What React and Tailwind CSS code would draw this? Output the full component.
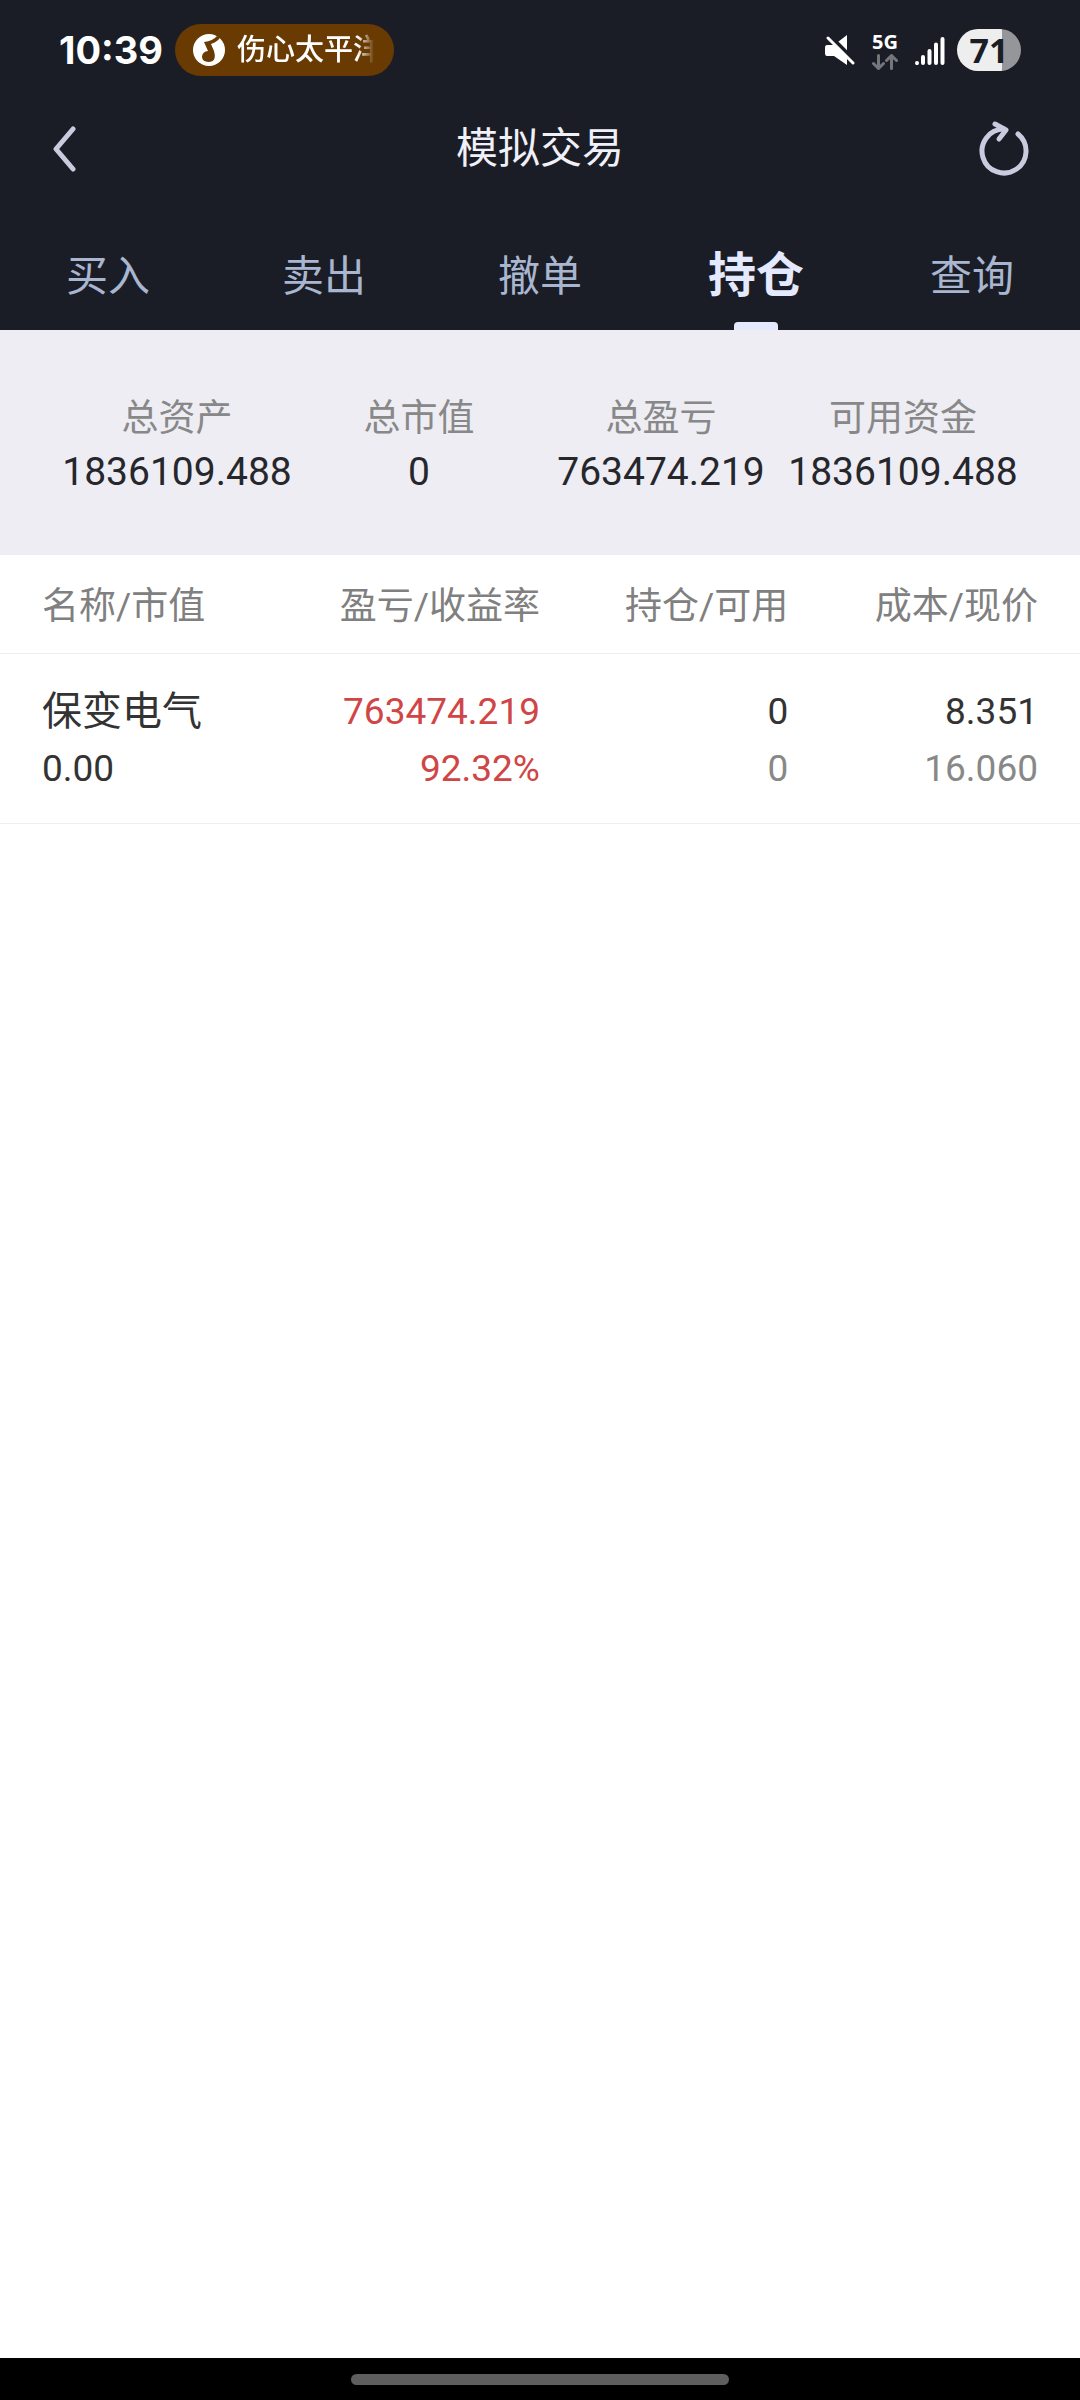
import React from "react";

const tabs = ["买入", "卖出", "撤单", "持仓", "查询"];

const summary = [
  { label: "总资产", value: "1836109.488" },
  { label: "总市值", value: "0" },
  { label: "总盈亏", value: "763474.219" },
  { label: "可用资金", value: "1836109.488" },
];

const columns = ["名称/市值", "盈亏/收益率", "持仓/可用", "成本/现价"];

function StatusBar() {
  return (
    <div className="flex h-[100px] items-center justify-between px-[59px]">
      <div className="flex items-center gap-3 text-white">
        <time className="font-[Inter] text-[38px] font-bold leading-none">10:39</time>
        <div className="flex h-[52px] items-center gap-3 rounded-full bg-[#693b02] pl-[18px] pr-5">
          <svg className="size-8" viewBox="0 0 32 32" aria-hidden="true">
            <circle cx="16" cy="16" r="16" fill="#fff" />
            <path
              d="M11 8 Q20 7 24 2 L27 3 Q26 7 18 10 L21 17 Q24 28 15.500 28 Q9 27.500 9 22.500 Q9.500 17.500 15 17Z"
              fill="#693b02"
            />
          </svg>
          <div className="w-[137px] overflow-hidden whitespace-nowrap text-[29px] font-medium leading-10 [mask-image:linear-gradient(to_right,black_88%,transparent)]">
            伤心太平洋
          </div>
        </div>
      </div>
      <div className="flex items-center text-white">
        <svg className="mr-4 h-[30px] w-[31px]" viewBox="0 0 31 30" aria-hidden="true">
          <path d="M2 10h7L22 0v30L9 21H2Q0 21 0 18V13Q0 10 2 10Z" fill="#fff" />
          <path d="M3 -1 L33 29" stroke="#1b1d26" strokeWidth="4" />
          <path d="M3 3 L28 28" stroke="#fff" strokeWidth="3" strokeLinecap="round" />
        </svg>
        <div className="mr-4 flex flex-col items-center gap-1 pt-1">
          <span className="font-['Open_Sans'] text-[20px] font-bold leading-4">5G</span>
          <svg className="h-4 w-[26px]" viewBox="0 0 26 16" fill="none" stroke="#74767c" strokeWidth="3" strokeLinecap="round" strokeLinejoin="round" aria-hidden="true">
            <path d="M6.500 1.500v13M1.500 9.500l5 5 5-5M19.500 14.500v-13M14.500 6.500l5-5 5 5" />
          </svg>
        </div>
        <svg className="mr-3 h-[30px] w-[31px]" viewBox="0 0 31 30" stroke="#fff" strokeWidth="4" strokeLinecap="round" aria-hidden="true">
          <path d="M3 28v0.100M9 22v6M15.500 16v12M22 9.500V28M28.500 4v24" />
        </svg>
        <div className="flex h-[42px] w-16 items-center justify-center rounded-full bg-[linear-gradient(to_right,#eeeeef_70%,#95969a_70%)] font-['Open_Sans'] text-[34px] font-bold leading-none text-[#1b1d26]">
          71
        </div>
      </div>
    </div>
  );
}

export default function App() {
  return (
    <div className="flex min-h-screen flex-col bg-white font-[Roboto,'Noto_Sans_CJK_SC',sans-serif]">
      <header className="bg-[#1b1d26]">
        <StatusBar />
        <div className="flex h-[98px] items-center justify-between px-[45px]">
          <button type="button" aria-label="返回" className="flex size-[60px] items-center pl-[7px]">
            <svg className="h-[46px] w-6" viewBox="0 0 24 46" fill="none" stroke="#cbcbe0" strokeWidth="5" strokeLinecap="round" strokeLinejoin="round">
              <path d="M21 3 L4 23 L21 43" />
            </svg>
          </button>
          <h1 className="text-[42px] leading-[60px] text-[#f0f0f8]">模拟交易</h1>
          <button type="button" aria-label="刷新" className="flex size-[60px] items-center justify-center">
            <svg className="size-[60px]" viewBox="0 0 60 60" fill="none" stroke="#cbcbe0" strokeWidth="5" strokeLinecap="round" strokeLinejoin="round">
              <path d="M43 15 A22 22 0 1 1 29 10" />
              <path d="M20 5 L31 11 L24 20" />
            </svg>
          </button>
        </div>
        <nav className="grid h-[132px] grid-cols-5">
          {tabs.map((tab) =>
            tab === "持仓" ? (
              <button key={tab} type="button" aria-current="page" className="relative pt-6 text-[48px] font-bold text-[#e4e9fe]">
                {tab}
                <span className="absolute inset-x-0 bottom-0 mx-auto h-2 w-11 rounded-t-sm bg-[#e4e9fe]" />
              </button>
            ) : (
              <button key={tab} type="button" className="pt-6 text-[42px] text-[#a9b6d0]">
                {tab}
              </button>
            )
          )}
        </nav>
      </header>

      <main className="flex-1">
        <dl className="grid h-[225px] grid-cols-4 bg-[#eeedf3] px-14 pt-[62px] text-center">
          {summary.map((item) => (
            <div key={item.label} className="flex flex-col items-center">
              <dt className="text-[37px] leading-[54px] text-[#888888]">{item.label}</dt>
              <dd className="text-[39px] leading-[52px] text-[#26272c]">{item.value}</dd>
            </div>
          ))}
        </dl>

        <table className="w-full table-fixed border-collapse">
          <colgroup>
            <col className="w-[27%]" />
            <col className="w-[23%]" />
            <col className="w-[23%]" />
            <col className="w-[27%]" />
          </colgroup>
          <thead>
            <tr className="border-b border-[#eeeeee]">
              {columns.map((c) => (
                <th key={c} scope="col" className="h-[98px] whitespace-nowrap pt-1.5 text-right text-[37px] font-normal text-[#808080] first:pl-[42px] first:text-left last:pr-[42px]">
                  {c}
                </th>
              ))}
            </tr>
          </thead>
          <tbody>
            <tr className="border-b border-[#eeeeee] text-right text-[37px] leading-[57px] text-[#333333]">
              <td className="h-[170px] pl-[42px] pt-1 text-left">
                <div className="text-[40px]">保变电气</div>
                <div>0.00</div>
              </td>
              <td className="pt-1 text-[#d04545]">
                <div>763474.219</div>
                <div>92.32%</div>
              </td>
              <td className="pt-1">
                <div>0</div>
                <div className="text-[#888888]">0</div>
              </td>
              <td className="pr-[42px] pt-1">
                <div>8.351</div>
                <div className="text-[#888888]">16.060</div>
              </td>
            </tr>
          </tbody>
        </table>
      </main>

      <footer className="flex h-[42px] justify-center bg-black pt-4">
        <div className="h-[11px] w-[35%] rounded-full bg-[#5e5e5e]" />
      </footer>
    </div>
  );
}
